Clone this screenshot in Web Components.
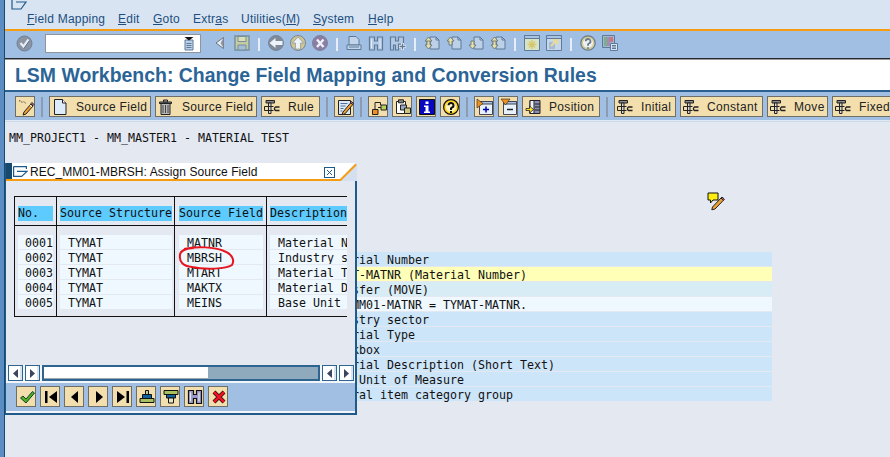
<!DOCTYPE html>
<html>
<head>
<meta charset="utf-8">
<title>LSM Workbench</title>
<style>
  html, body { margin: 0; padding: 0; background: #e3e8f1; }
</style>
</head>
<body>

<sap-window>
  <sap-menubar>
    <span><u>F</u>ield Mapping</span>
    <span><u>E</u>dit</span>
    <span><u>G</u>oto</span>
    <span>Extr<u>a</u>s</span>
    <span>Utilities(<u>M</u>)</span>
    <span><u>S</u>ystem</span>
    <span><u>H</u>elp</span>
  </sap-menubar>

  <sap-toolbar kind="system">
    <sap-icon name="enter"></sap-icon>
    <sap-command></sap-command>
    <sap-icon name="tri" style="margin-left:5px"></sap-icon>
    <sap-icon name="save"></sap-icon>
    <sap-sep></sap-sep>
    <sap-icon name="back"></sap-icon>
    <sap-icon name="up"></sap-icon>
    <sap-icon name="cancel"></sap-icon>
    <sap-sep></sap-sep>
    <sap-icon name="print"></sap-icon>
    <sap-icon name="find"></sap-icon>
    <sap-icon name="findnext"></sap-icon>
    <sap-sep></sap-sep>
    <sap-icon name="pgfirst"></sap-icon>
    <sap-icon name="pgprev"></sap-icon>
    <sap-icon name="pgnext"></sap-icon>
    <sap-icon name="pglast"></sap-icon>
    <sap-sep></sap-sep>
    <sap-icon name="session"></sap-icon>
    <sap-icon name="shortcut"></sap-icon>
    <sap-sep></sap-sep>
    <sap-icon name="helpgrey"></sap-icon>
    <sap-icon name="layout"></sap-icon>
  </sap-toolbar>

  <sap-title>LSM Workbench: Change Field Mapping and Conversion Rules</sap-title>

  <sap-toolbar kind="app">
    <sap-btn icon="wand"></sap-btn>
    <sap-sep tone="dark"></sap-sep>
    <sap-btn icon="doc" w="102">Source Field</sap-btn>
    <sap-btn icon="trash" w="102">Source Field</sap-btn>
    <sap-btn icon="rule" w="59">Rule</sap-btn>
    <sap-sep tone="dark"></sap-sep>
    <sap-btn icon="edit"></sap-btn>
    <sap-sep tone="dark"></sap-sep>
    <sap-btn icon="hier"></sap-btn>
    <sap-btn icon="copy"></sap-btn>
    <sap-btn icon="info"></sap-btn>
    <sap-btn icon="help"></sap-btn>
    <sap-sep tone="dark"></sap-sep>
    <sap-btn icon="expand"></sap-btn>
    <sap-btn icon="collapse"></sap-btn>
    <sap-btn icon="position" w="78">Position</sap-btn>
    <sap-sep tone="dark"></sap-sep>
    <sap-btn icon="rule" w="62">Initial</sap-btn>
    <sap-btn icon="rule" w="83">Constant</sap-btn>
    <sap-btn icon="rule" w="61">Move</sap-btn>
    <sap-btn icon="rule" w="62">Fixed</sap-btn>
  </sap-toolbar>

  <sap-content>
    <div slot="head">MM_PROJECT1 - MM_MASTER1 - MATERIAL TEST</div>
    <sap-row>Material Number</sap-row>
    <sap-row tone="yellow">TYMAT-MATNR (Material Number)</sap-row>
    <sap-row tone="pale">Transfer (MOVE)</sap-row>
    <sap-row tone="white">REC_MM01-MATNR = TYMAT-MATNR.</sap-row>
    <sap-row>Industry sector</sap-row>
    <sap-row>Material Type</sap-row>
    <sap-row>Checkbox</sap-row>
    <sap-row>Material Description (Short Text)</sap-row>
    <sap-row>Base Unit of Measure</sap-row>
    <sap-row>General item category group</sap-row>
  </sap-content>

  <sap-icon name="note" style="position:absolute;left:703px;top:192px;width:18px;height:18px"></sap-icon>

  <sap-dialog heading="REC_MM01-MBRSH: Assign Source Field">
    <sap-grid>
      <sap-col head="No." pl="3" pr="3" w="42" align="right">
        <span>0001</span><span>0002</span><span>0003</span><span>0004</span><span>0005</span>
      </sap-col>
      <sap-col head="Source Structure" pl="3" pr="2" w="118" indent="8">
        <span>TYMAT</span><span>TYMAT</span><span>TYMAT</span><span>TYMAT</span><span>TYMAT</span>
      </sap-col>
      <sap-col head="Source Field" pl="4" pr="3" w="92" indent="8">
        <span>MATNR</span><span>MBRSH</span><span>MTART</span><span>MAKTX</span><span>MEINS</span>
      </sap-col>
      <sap-col head="Description" pl="3" pr="0" w="81" indent="8">
        <span>Material Number</span><span>Industry sector</span><span>Material Type</span><span>Material Description</span><span>Base Unit</span>
      </sap-col>
    </sap-grid>
    <sap-scrollbar slot="foot"></sap-scrollbar>
    <sap-toolbar slot="foot" kind="dialog">
      <sap-btn icon="ok"></sap-btn>
      <sap-btn icon="first"></sap-btn>
      <sap-btn icon="prev"></sap-btn>
      <sap-btn icon="next"></sap-btn>
      <sap-btn icon="last"></sap-btn>
      <sap-btn icon="sortup"></sap-btn>
      <sap-btn icon="filter"></sap-btn>
      <sap-btn icon="binoc"></sap-btn>
      <sap-btn icon="del"></sap-btn>
    </sap-toolbar>
  </sap-dialog>
</sap-window>

<script>
// small helper, every element below gets its markup this way
function shadow(el, html) {
  el.attachShadow({ mode: "open" });
  el.shadowRoot.innerHTML = html;
}

const MONO = `"DejaVu Sans Mono", "Liberation Mono", monospace`;
const SANS = `"Liberation Sans", Arial, sans-serif`;

const GO = `stroke="#5f7a98" fill="#b4cae5"`; // greyed system toolbar look
const pageIcon = (arrow) => `
  <path d="M6 2h6l3 3v9H6z" fill="#bcd0e8" stroke="#5f7a98"/>
  <path d="M12 2v3h3" fill="none" stroke="#5f7a98"/>
  ${arrow}`;
const upArrow = (x, y) => `<path d="M${x} ${y}l3.5-4 3.5 4h-2v4h-3v-4z" fill="#e6dea8" stroke="#5f6f70" stroke-width=".8"/>`;
const dnArrow = (x, y) => `<path d="M${x} ${y}l3.5 4 3.5-4h-2v-4h-3v4z" fill="#e6dea8" stroke="#5f6f70" stroke-width=".8"/>`;

const rule = `
  <path d="M2 1.5h8.5v2.5H2z" fill="#8a8a8a" stroke="#222"/>
  <path d="M4.5 4v10.5h2.5V4z" fill="#d8d8d8" stroke="#222"/>
  <path d="M.5 7.5h9M.5 11.5h9" stroke="#222" fill="none"/>
  <path d="M.5 7.5v4" stroke="#222"/>
  <path d="M15.5 8H11.5a2 2 0 0 0 0 3.5h4" fill="none" stroke="#222" stroke-width="1.4"/>`;

const ICONS = {
  enter: `<circle cx="8.5" cy="8.5" r="7.5" fill="#8a94a2" stroke="#6f8098"/>
    <path d="M4.5 8l3 3.5 5-7" fill="none" stroke="#e6edf6" stroke-width="2.2"/>
    <path d="M8 13.5l5.5-8" fill="none" stroke="#5f7a98"/>`,
  tri: `<path d="M11.5 2.5v11L4 8z" fill="#e9eef5" stroke="#6e7680"/><path d="M11.5 3v10L8.5 8z" fill="#8d96a2"/>`,
  save: `<path d="M1 1h14v14H1z" fill="#c7cc9e" stroke="#76909e" stroke-width="1.4"/>
    <path d="M4 1.5h8v5H4z" fill="#d9e0b8" stroke="#76909e"/><path d="M4 10h8v5H4z" fill="#a3bcd8" stroke="#76909e"/>`,
  back: `<circle cx="8" cy="8" r="7.5" fill="#808a98" stroke="#76869c"/><path d="M1.5 8L7.5 3v3h7v4h-7v3z" fill="#eef3f9"/>`,
  up: `<circle cx="8" cy="8" r="7.5" fill="#cfc68e" stroke="#76869c"/><path d="M8 2l5.5 6h-3v6h-5V8h-3z" fill="#eef3f9" stroke="#76869c" stroke-width=".6"/>`,
  cancel: `<circle cx="8" cy="8" r="7.5" fill="#8d7ca4" stroke="#76869c"/><path d="M5 4.5l6.5 7.5M11.5 4.5L5 12" stroke="#eef3f9" stroke-width="2.4"/>`,
  print: `<path d="M3 1.5h7l3 3V10H3z" fill="#c3d5ea" stroke="#5f7a98"/><path d="M1 10h14v4.5H1z" fill="#c3d5ea" stroke="#5f7a98"/><path d="M3 12h10" stroke="#5f7a98"/>`,
  find: `<path d="M1.5 2h5v4h3V2h5v13h-5v-5h-3v5h-5z" ${GO} stroke-width="1.2"/><path d="M3.5 4v9M12 4v9" stroke="#e3ebf5"/>`,
  findnext: `<path d="M.5 2h5v4h3V2h5v7h-5v6h-3v-5h-2v5h-3z" ${GO} stroke-width="1.2"/>
    <path d="M9 11.5h7M12.5 8v7" stroke="#eef3f9" stroke-width="3"/><path d="M9.5 11.5h6M12.5 8.5v6" stroke="#5f7a98" stroke-width="1.4"/>`,
  pgfirst: pageIcon(upArrow(1, 6) + dnArrow(1, 10)),
  pgprev: pageIcon(upArrow(1, 6)),
  pgnext: pageIcon(dnArrow(1, 10)),
  pglast: pageIcon(upArrow(1, 6) + dnArrow(1, 10)),
  session: `<path d="M.5.5h15v15H.5z" fill="#d8e4c8" stroke="#5f7a98"/><path d="M.5.5h15v3H.5z" fill="#a9c3e2" stroke="#5f7a98"/>
    <path d="M8 5v9M3.5 9.5h9M5 6.5l6 6M11 6.5l-6 6" stroke="#d6c76a" stroke-width="1.3"/>`,
  shortcut: `<path d="M.5.5h15v15H.5z" fill="#c6d7ec" stroke="#5f7a98"/><path d="M.5.5h15v3H.5z" fill="#a9c3e2" stroke="#5f7a98"/>
    <path d="M3 7h6v7H3z" fill="#a9bbd2"/><path d="M5 11l6-6M7 5h4.5v4.5" fill="none" stroke="#e6dc96" stroke-width="2"/>`,
  helpgrey: `<circle cx="8" cy="8" r="7.2" fill="#d2cb9a" stroke="#6a7a88" stroke-width="1.2"/><circle cx="8" cy="8" r="5" fill="#eef1f2"/>
    <path d="M5.7 6.2A2.4 2.3 0 1 1 8.8 8.5L8 9.4v1.4" fill="none" stroke="#6a7a88" stroke-width="1.8"/><path d="M7 12.2h2v1.6H7z" fill="#6a7a88"/>`,
  layout: `<path d="M.5.5h12v12H.5z" fill="#9fb7d4" stroke="#5f7a98"/><path d="M2 2h3v9H2z" fill="#78b08c"/><path d="M5 2h3v9H5z" fill="#a888b4"/><path d="M8 2h3v5H8z" fill="#c87878"/>
    <path d="M8.5 8.5h7v7h-7z" fill="#dbe6f3" stroke="#5f7a98"/><path d="M10 10.5h4M10 12h4M10 13.5h4" stroke="#5f7a98"/>`,
  dropdown: `<path d="M2 3h8v10H2z" fill="#b9d0e8" stroke="#5f7a98"/><path d="M3.5 6.5h5M3.5 8.5h5M3.5 10.5h5" stroke="#5f7a98"/><path d="M1.5 0h9L6 3.5z" fill="#111"/>`,

  wand: `<path d="M1 2c2-1 2 2 4 1s2 2 3 1" fill="none" stroke="#333" stroke-dasharray="1.5 1"/>
    <path d="M6 13L13 5l2 2-7 8-3 1z" fill="#f0a030" stroke="#222"/><path d="M12 6l2 2" stroke="#fff"/><path d="M13 4.5l1-1 2 2-1 1z" fill="#d070a0" stroke="#222"/>`,
  doc: `<path d="M2.5 .5h8l3.5 3.5v11.5H2.5z" fill="#dcecfb" stroke="#222"/><path d="M10.5 .5v3.5h3.5" fill="#fff" stroke="#222"/>`,
  trash: `<path d="M1.5 3h12v1.5h-12z" fill="#888" stroke="#222"/><path d="M5.5 1h4v2h-4z" fill="#aaa" stroke="#222"/>
    <path d="M3 4.5h9v11H3z" fill="#b8b8b8" stroke="#222"/><path d="M5 6v8M7.5 6v8M10 6v8" stroke="#444"/>`,
  rule,
  edit: `<path d="M1.5 1.5h12v14h-12z" fill="#dbe8f6" stroke="#222"/><path d="M3.5 4.5h7M3.5 7h5M3.5 9.5h3M3.5 12h2" stroke="#5070a0"/>
    <path d="M6 13L14 3.5l2 1.8L8 14.8l-3 1z" fill="#f0a030" stroke="#222"/><path d="M13.5 3.5l1-1 2 1.8-1 1z" fill="#d070a0" stroke="#222"/>`,
  hier: `<path d="M1.5 10.5h5.5v5H1.5z" fill="#f09020" stroke="#222"/><path d="M10 6h5.5v5H10z" fill="#b8d060" stroke="#222"/>
    <path d="M4 10V3.5h5.5V6" fill="none" stroke="#222"/><path d="M7 8.5h3" stroke="#222"/>`,
  copy: `<path d="M1.5 2.5h9v12h-9z" fill="#fff" stroke="#222"/><path d="M3.5 .8h5v3h-5z" fill="#888" stroke="#222"/>
    <path d="M5.5 6h6v5h-6z" fill="#9aa8c0" stroke="#222"/><path d="M9.5 9h6v5.5h-6z" fill="#c8c880" stroke="#222"/>`,
  info: `<path d="M.5.5h15v15H.5z" fill="#0808c0" stroke="#111"/><path d="M6.5 2.5h3V5h-3zM5 6.5h4.5v6H11V14H5v-1.5h1.5v-4.5H5z" fill="#fff"/>`,
  help: `<circle cx="8" cy="8" r="7.4" fill="#ffd820" stroke="#111" stroke-width="1.2"/><circle cx="8" cy="8" r="5" fill="#fff6c8"/>
    <path d="M5.5 6.2A2.5 2.4 0 1 1 8.8 8.6L8 9.5v1.4" fill="none" stroke="#111" stroke-width="2"/><path d="M7 12h2v2H7z" fill="#111"/>`,
  expand: `<path d="M2.5 2.5h13v13h-13z" fill="#e6f1fb" stroke="#445"/><path d="M2.5 2.5h13V5h-13z" fill="#a9c3e2" stroke="#445"/>
    <path d="M9 7.5v6M6 10.5h6" stroke="#0000b0" stroke-width="1.5"/><path d="M0 0l6 4.5L0 9z" fill="#f09020" stroke="#222" stroke-width=".6"/>`,
  collapse: `<path d="M2.5 2.5h13v13h-13z" fill="#e6f1fb" stroke="#445"/><path d="M2.5 2.5h13V5h-13z" fill="#a9c3e2" stroke="#445"/>
    <path d="M6 10.5h6" stroke="#222" stroke-width="1.5"/><path d="M0 0h9L4.5 6z" fill="#f09020" stroke="#222" stroke-width=".6"/>`,
  position: `<path d="M5 1.5h10v13H5z" fill="#8c90b4" stroke="#222"/><path d="M5 1.5h4v13H5z" fill="#eef3f9" stroke="#222"/><path d="M10 5h5M10 8h5M10 11h5" stroke="#222"/>
    <path d="M1 9.5h3.500V7l4 3.500-4 3.500v-2.500H1z" fill="#ffe030" stroke="#222" stroke-width=".8"/>`,

  ok: `<path d="M1.5 9l2.500-2 3 3L13.500 2.500l2 1.500L7 14z" fill="#50b020" stroke="#143"/>`,
  first: `<path d="M2 2h2.500v12H2zM14 2v12L6 8z" fill="#000"/>`,
  prev: `<path d="M11 2v12L4 8z" fill="#000"/>`,
  next: `<path d="M5 2v12l7-6z" fill="#000"/>`,
  last: `<path d="M11.5 2H14v12h-2.5zM2 2v12l8-6z" fill="#000"/>`,
  sortup: `<path d="M6.5 1.5h3v4h-3z" fill="#c0d0a0" stroke="#111"/><path d="M3.5 5.5h9v4h-9z" fill="#1060a0" stroke="#111"/><path d="M1 9.5h14v4H1z" fill="#a8c060" stroke="#111"/>`,
  filter: `<path d="M1 1.5h14v4H1z" fill="#a8c060" stroke="#111"/><path d="M3.5 5.5h9V9h-9z" fill="#1060a0" stroke="#111"/><path d="M5.5 9h5v5h-5z" fill="#e8e8c0" stroke="#111"/>`,
  binoc: `<path d="M1.5 1.5h5v4h3v-4h5v13h-5v-5h-3v5h-5z" fill="#9a9ac8" stroke="#111" stroke-width="1.2"/><path d="M3.5 3.5v9M12 3.5v9" stroke="#e8e8f4" stroke-width="1.2"/>`,
  del: `<path d="M3 3l10 10M13 3L3 13" stroke="#111" stroke-width="4"/><path d="M3 3l10 10M13 3L3 13" stroke="#f01020" stroke-width="2.6"/>`,

  note: `<path d="M1 1h10v7H6l-2.500 3V8H1z" fill="#ffee10" stroke="#111"/>
    <path d="M5.500 15L14 6l2.500 2.200L8 17l-3.200 .8z" fill="#f0a030" stroke="#222"/><path d="M14 6l1-1 2.400 2.200-1 1z" fill="#d070a0" stroke="#222"/>`
};

class SapIcon extends HTMLElement {
  connectedCallback() {
    const vb = this.getAttribute("name") === "note" ? "0 0 18 18" : "0 0 16 16";
    shadow(this, `
      <style>
        :host { display: block; width: 16px; height: 16px; flex: none; line-height: 0; }
        svg { width: 100%; height: 100%; overflow: visible; }
      </style>
      <svg viewBox="${vb}" xmlns="http://www.w3.org/2000/svg">${ICONS[this.getAttribute("name")] || ""}</svg>`);
  }
}

class SapWindow extends HTMLElement {
  connectedCallback() {
    shadow(this, `
      <style>
        :host {
          display: flex; flex-direction: column;
          position: relative; box-sizing: border-box;
          width: 890px; height: 457px; overflow: hidden;
          border-left: 4px solid #5b8cc2;
          background: #e3e8f1;
          font-family: ${SANS};
        }
        .edge { position: absolute; left: 0; top: 0; bottom: 0; width: 1px; background: #17496e; }
        .col { display: flex; flex-direction: column; flex: 1; margin-left: 1px; min-height: 0; }
      </style>
      <div class="edge"></div>
      <div class="col"><slot></slot></div>`);
  }
}

class SapMenubar extends HTMLElement {
  connectedCallback() {
    shadow(this, `
      <style>
        :host {
          display: grid; flex: none;
          grid-template-columns: 91px 35px 40px 48px 72px 55px auto;
          box-sizing: border-box; height: 31px;
          padding: 12px 0 0 22px;
          position: relative;
          background: #d8e4f2;
          border-bottom: 2px solid #f59c10;
          font-size: 12px; letter-spacing: .22px; line-height: 15px;
          color: #1c4f80;
        }
        svg { position: absolute; left: 6px; top: -5px; }
      </style>
      <svg width="17" height="15" viewBox="0 0 17 15" fill="none" stroke="#1d5a8c" stroke-width="1.2">
        <path d="M1 0v14h9l5-7H5M11 0l3 3"/>
      </svg>
      <slot></slot>`);
  }
}

class SapToolbar extends HTMLElement {
  connectedCallback() {
    const kind = this.getAttribute("kind");
    const css = {
      system: `height: 27px; padding: 4px 0 0 11px; gap: 6px; align-items: flex-start;`,
      app: `height: 28px; padding: 4px 0 0 10px; gap: 4px; align-items: flex-start; overflow: hidden;`,
      dialog: `height: 28px; padding: 3px 0 0 10px; gap: 4px; align-items: flex-start;`
    }[kind];
    shadow(this, `
      <style>
        :host { display: flex; flex: none; box-sizing: border-box; background: #a0bfe3; ${css} }
      </style>
      <slot></slot>`);
  }
}

class SapCommand extends HTMLElement {
  connectedCallback() {
    shadow(this, `
      <style>
        :host {
          display: flex; justify-content: flex-end; flex: none;
          box-sizing: border-box; width: 156px; height: 19px;
          margin: -1px 0 0 7px; padding: 2px 5px 0 0;
          background: #fff; border: 1px solid #8f959c;
        }
        svg { width: 12px; height: 14px; }
      </style>
      <svg viewBox="0 0 12 14">${ICONS.dropdown}</svg>`);
  }
}

class SapSep extends HTMLElement {
  connectedCallback() {
    const dark = this.getAttribute("tone") === "dark";
    shadow(this, `
      <style>
        :host { display: flex; justify-content: center; flex: none; width: 6px; }
        i {
          display: block; width: 2px;
          height: ${dark ? "20px" : "13px"};
          margin-top: ${dark ? "1px" : "3px"};
          background: ${dark ? "#8c9cb0" : "#e6edf6"};
        }
      </style>
      <i></i>`);
  }
}

class SapTitle extends HTMLElement {
  connectedCallback() {
    shadow(this, `
      <style>
        :host {
          display: block; flex: none; box-sizing: border-box;
          height: 34px; padding: 2px 0 0 10px;
          background: #fff;
          border-top: 1px solid #26282c;
          box-shadow: inset 0 1px 0 #9a9a9a;
          border-bottom: 2px solid #2a6090;
          font: bold 19.45px/28px ${SANS};
          color: #2b6496;
        }
      </style>
      <slot></slot>`);
  }
}

class SapBtn extends HTMLElement {
  connectedCallback() {
    const w = this.getAttribute("w") || 20;
    shadow(this, `
      <style>
        :host {
          display: flex; align-items: center; flex: none;
          box-sizing: border-box; width: ${w}px; height: 21px;
          padding-left: 2px;
          gap: 8px;
          background: #f3dfae;
          border: 1px solid #6e6e68;
          font-size: 12px; letter-spacing: .32px; color: #222;
          white-space: nowrap;
        }
      </style>
      <sap-icon name="${this.getAttribute("icon")}"></sap-icon>
      <span><slot></slot></span>`);
  }
}

class SapContent extends HTMLElement {
  connectedCallback() {
    shadow(this, `
      <style>
        :host {
          display: block; flex: 1; min-height: 0; box-sizing: border-box;
          border-top: 1px solid #e3e8f1;
          box-shadow: inset 0 1px 0 #c6dbf0;
          padding: 10px 0 0 4px;
          font: 11.63px/15px ${MONO};
          color: #111;
        }
        .head { height: 121px; }
        .rows { width: 763px; }
      </style>
      <div class="head"><slot name="head"></slot></div>
      <div class="rows"><slot></slot></div>`);
  }
}

class SapRow extends HTMLElement {
  connectedCallback() {
    const bg = { yellow: "#ffffb8", pale: "#d8ecf5", white: "#eef8fe" }[this.getAttribute("tone")] || "#cde5f9";
    shadow(this, `
      <style>
        :host {
          display: block; box-sizing: border-box; height: 14px; margin-bottom: 1px;
          padding-left: 315px;
          background: ${bg};
          line-height: 16px; white-space: nowrap;
        }
      </style>
      <slot></slot>`);
  }
}

class SapDialog extends HTMLElement {
  connectedCallback() {
    const heading = this.getAttribute("heading");
    shadow(this, `
      <style>
        :host {
          position: absolute; left: 1px; top: 163px;
          display: flex; flex-direction: column;
          box-sizing: border-box; width: 352px; height: 252px;
          background: #e3e8f1;
          border: solid #1f5a88; border-width: 0 2px 2px 1px;
        }
        .bar {
          position: relative; flex: none; height: 18px;
          display: flex; align-items: center;
          padding-left: 7px; box-sizing: border-box;
          font-size: 12px; letter-spacing: .06px; color: #111;
          white-space: nowrap;
        }
        .bar > svg.bg { position: absolute; left: 0; top: 0; }
        .bar > * { position: relative; }
        .bar > svg.mark { margin-top: -2px; }
        .close {
          position: absolute; left: 318px; top: 4px;
          width: 11px; height: 11px; box-sizing: border-box;
          border: 1px solid #1d5a8c; background: #fff;
        }
        .title { margin-left: 2px; }
        .body { flex: 1; min-height: 0; padding: 15px 0 0 8px; }
        .foot { flex: none; padding-bottom: 2px; background: #f2f5fa; }
        .ring { position: absolute; left: 169px; top: 81px; }
      </style>
      <div class="bar">
        <svg class="bg" width="351" height="18" viewBox="0 0 351 18">
          <path d="M0 0h351v18H0z" fill="#d4e0ef"/>
          <path d="M0 0h349.500L334 16.500H0z" fill="#fff"/>
          <path d="M0 0h6v16H0z" fill="#17496e"/>
          <path d="M0 17h334.500L350 1.500" fill="none" stroke="#f59c10" stroke-width="2"/>
        </svg>
        <svg class="mark" width="15" height="11" viewBox="0 0 15 11" fill="none" stroke="#1d5a8c" stroke-width="1.2">
          <path d="M.6 .6h12.800v2.400M.6 .6v9.800h8l5.400-5H4"/>
        </svg>
        <span class="title">${heading}</span>
        <span class="close">
          <svg width="9" height="9" viewBox="0 0 9 9" style="display:block"><path d="M2 2l5 5M7 2L2 7" stroke="#1d5a8c"/></svg>
        </span>
      </div>
      <div class="body"><slot></slot></div>
      <div class="foot"><slot name="foot"></slot></div>
      <svg class="ring" width="62" height="28" viewBox="175 244 62 28" fill="none" stroke="#e8141e" stroke-width="2">
        <path d="M184 249C196 246 215 247 224 251C232 254 235 260 232 265C226 269 205 270 192 267C183 266 179 262 180 255C180 251 186 248 194 248"/>
      </svg>`);
  }
}

class SapGrid extends HTMLElement {
  connectedCallback() {
    shadow(this, `
      <style>
        :host {
          display: flex; box-sizing: border-box;
          width: 333px; height: 121px; overflow: hidden;
          border: solid #111; border-width: 1px 0;
          font: 11.63px/15px ${MONO}; color: #111;
          white-space: nowrap;
        }
      </style>
      <slot></slot>`);
  }
}

class SapCol extends HTMLElement {
  connectedCallback() {
    const pl = this.getAttribute("pl"), pr = this.getAttribute("pr");
    const indent = this.getAttribute("indent") || 0;
    const align = this.getAttribute("align") || "left";
    shadow(this, `
      <style>
        :host {
          display: block; flex: none; box-sizing: border-box;
          width: ${this.getAttribute("w")}px;
          border-left: 1px solid #111;
        }
        .head { height: 29px; box-sizing: border-box; padding: 9px ${pr}px 0 ${pl}px; border-bottom: 1px solid #111; }
        .head span { display: block; height: 15px; line-height: 15px; background: #5ecbff; overflow: hidden; text-align: left; }
        .cells { padding: 9px ${pr}px 0 ${pl}px; }
        ::slotted(span) {
          display: block; height: 14px; line-height: 16px; margin-bottom: 1px;
          overflow: hidden;
          background: #eef8fe;
          padding-left: ${indent}px;
          text-align: ${align};
        }
      </style>
      <div class="head"><span>${this.getAttribute("head")}</span></div>
      <div class="cells"><slot></slot></div>`);
  }
}

class SapScrollbar extends HTMLElement {
  connectedCallback() {
    const arrow = (d) => `<button><svg width="9" height="11" viewBox="0 0 9 11"><path d="${d}" fill="#3c4560"/></svg></button>`;
    const L = "M7 1v9L2 5.500z", R = "M2 1v9l5-4.500z";
    shadow(this, `
      <style>
        :host {
          display: flex; gap: 2px; box-sizing: border-box;
          height: 18px; padding: 0 0 2px 2px;
          background: #f2f5fa;
        }
        button {
          display: flex; align-items: center; justify-content: center;
          box-sizing: border-box; width: 15px; height: 16px; padding: 0;
          background: #fff; border: 1px solid #2d6590;
          box-shadow: inset -2px 0 0 #d8e4f2;
        }
        .track {
          width: 278px; box-sizing: border-box; margin-left: 0;
          border: 2px solid #2d6590; background: #8faabc;
        }
        .thumb { width: 164px; height: 100%; background: #fff; border-bottom: 1px solid #9aa6b0; box-sizing: border-box; }
      </style>
      ${arrow(L)}${arrow(R)}
      <div class="track"><div class="thumb"></div></div>
      ${arrow(L)}${arrow(R)}`);
  }
}

[
  ["sap-icon", SapIcon], ["sap-window", SapWindow], ["sap-menubar", SapMenubar],
  ["sap-toolbar", SapToolbar], ["sap-command", SapCommand], ["sap-sep", SapSep],
  ["sap-title", SapTitle], ["sap-btn", SapBtn], ["sap-content", SapContent],
  ["sap-row", SapRow], ["sap-dialog", SapDialog], ["sap-grid", SapGrid],
  ["sap-col", SapCol], ["sap-scrollbar", SapScrollbar]
].forEach(([n, c]) => customElements.define(n, c));
</script>
</body>
</html>
